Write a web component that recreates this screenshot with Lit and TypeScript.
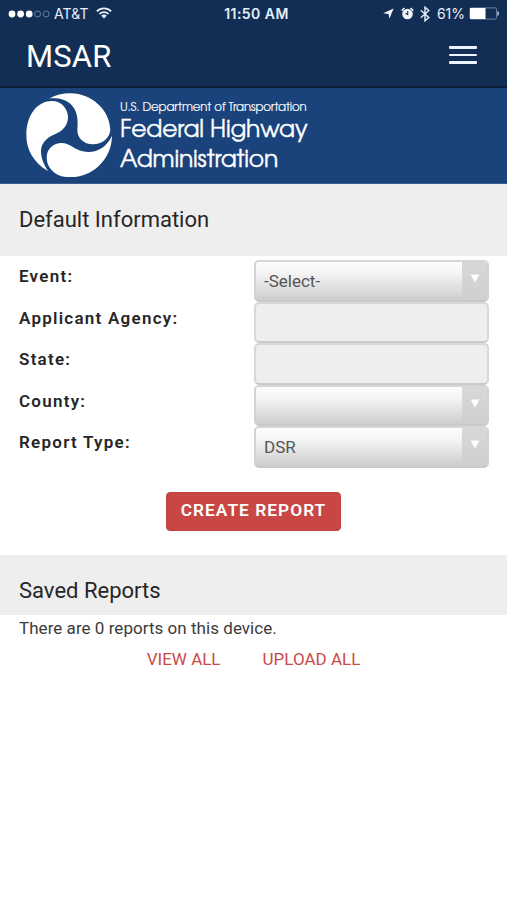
import { LitElement, html, css, svg } from "lit";
import { customElement } from "lit/decorators.js";

interface Field {
  label: string;
  kind: "select" | "text";
  value: string;
}

const fields: Field[] = [
  { label: "Event:", kind: "select", value: "-Select-" },
  { label: "Applicant Agency:", kind: "text", value: "" },
  { label: "State:", kind: "text", value: "" },
  { label: "County:", kind: "select", value: "" },
  { label: "Report Type:", kind: "select", value: "DSR" },
];

@customElement("status-bar")
class StatusBar extends LitElement {
  static styles = css`
    :host {
      display: grid;
      grid-template-columns: 1fr auto 1fr;
      align-items: center;
      height: 27px;
      padding: 0 7px 0 8px;
      box-sizing: border-box;
      color: #e6eefa;
      font: 14px/27px Inter, sans-serif;
    }
    svg { display: block; flex: none; }
    .left, .right { display: flex; align-items: center; }
    .right { justify-content: flex-end; }
    .carrier { margin-left: 4px; letter-spacing: 0.1px; }
    .wifi { margin-left: 7px; margin-top: -2px; }
    .time { font-weight: 600; letter-spacing: 0.45px; font-size: 14px; padding-left: 5px; }
    .arrow { margin-right: 7px; }
    .alarm { margin-right: 6px; }
    .bt { margin-right: 7px; }
    .pct { letter-spacing: 0; margin-right: 4px; }
  `;
  render() {
    return html`
      <div class="left">
        <svg width="42" height="10" viewBox="0 0 42 10">
          ${[4, 12.6, 21.2].map((x) => svg`<circle cx=${x} cy="5" r="3.4" fill="#fff" />`)}
          ${[29.6, 38.2].map((x) => svg`<circle cx=${x} cy="5" r="3" fill="none" stroke="#7086ae" stroke-width=".9" />`)}
        </svg>
        <span class="carrier">AT&amp;T</span>
        <svg class="wifi" width="16" height="12" viewBox="0 0 16 12" fill="none" stroke="#e6eefa" stroke-width="1.7">
          <path d="M.8 4.3C4.8.3 11.2.3 15.2 4.3M3.3 7C6 4.4 10 4.4 12.7 7" />
          <path d="M5.2 8.7Q8 6.5 10.8 8.7L8 11.6Z" fill="#e6eefa" stroke="none" />
        </svg>
      </div>
      <span class="time">11:50 AM</span>
      <div class="right">
        <svg class="arrow" width="11" height="11" viewBox="0 0 11 11"><path d="M10.6.4 6.4 10.8 5.5 5.9.2 5.2Z" fill="#f2f6fc" /></svg>
        <svg class="alarm" width="13" height="13" viewBox="0 0 13 13">
          <circle cx="6.5" cy="7" r="5.3" fill="#f2f6fc" />
          <path d="M.7 3.6 3.5 1M12.3 3.6 9.5 1" stroke="#e6eefa" stroke-width="1.6" />
          <path d="M6.7 4V7.6L4.5 6.2" fill="none" stroke="#122e55" stroke-width="1.1" />
        </svg>
        <svg class="bt" width="10" height="16" viewBox="0 0 10 16"><path d="M.8 4.2 8.8 11.4 5 14.8V1.2L8.8 4.6.8 11.8" fill="none" stroke="#e6eefa" stroke-width="1.4" /></svg>
        <span class="pct">61%</span>
        <svg width="31" height="13" viewBox="0 0 31 13">
          <rect x=".9" y=".9" width="26.7" height="11.2" rx="1.6" fill="none" stroke="#8498b9" stroke-width=".8" />
          <path d="M1 1H16.5V12H1Z" fill="#fff" />
          <path d="M28.8 4.4Q30.4 6.5 28.8 8.6Z" fill="#e6eefa" stroke="#e6eefa" stroke-width=".5" />
        </svg>
      </div>`;
  }
}

@customElement("agency-banner")
class AgencyBanner extends LitElement {
  static styles = css`
    :host {
      display: flex;
      align-items: flex-start;
      height: 98px;
      box-sizing: border-box;
      padding: 5px 0 0 26px;
      background: #19437a;
      border-top: 2px solid #0d2039;
      border-bottom: 1px solid #3c5f8e;
      color: #fff;
      font-family: "TeX Gyre Adventor", "Century Gothic", Lato, sans-serif;
    }
    svg { display: block; flex: none; }
    .names { margin-left: 8px; white-space: nowrap; -webkit-text-stroke: 0.35px #fff; }
    .dept { font-size: 11.8px; line-height: 14px; margin-top: 8px; letter-spacing: -0.16px; -webkit-text-stroke-width: 0.1px; }
    .name { font-size: 23.5px; line-height: 29.5px; letter-spacing: -0.2px; padding-top: 2px; }
  `;
  render() {
    return html`
      <svg width="86" height="84.3" viewBox="78 33 258 253" fill="#fff">
        <path d="M145 268C98 241 78 200 79 157C80 97 113 57 156 57C184 57 203 80 204 104C204 126 192 145 168 155C135 168 122 187 123 211C125 235 133 251 145 268Z" />
        <path d="M147 50C166 39 188 34 211 34C276 35 329 84 331 143C330 168 306 187 279 187C250 186 232 168 232 143C235 112 232 87 214 68C196 51 171 47 147 50Z" />
        <path d="M336 161C335 231 280 286 208 286C166 285 140 258 140 227C140 200 161 183 185 183C202 183 214 193 231 202C274 222 317 203 336 161Z" />
      </svg>
      <div class="names">
        <div class="dept">U.S. Department of Transportation</div>
        <div class="name">Federal Highway<br />Administration</div>
      </div>`;
  }
}

@customElement("app-root")
class AppRoot extends LitElement {
  static styles = css`
    :host {
      display: block;
      min-height: 900px;
      background: #fff;
      color: #262626;
      font-family: Roboto, sans-serif;
    }
    .top { background: #122e55; height: 86px; }
    .bar {
      display: flex;
      justify-content: space-between;
      align-items: center;
      height: 58px;
      padding: 0 30px 0 26px;
    }
    .title { color: #fff; font-size: 31px; letter-spacing: 0.15px; line-height: 58px; padding-top: 1px; }
    .menu { display: flex; flex-direction: column; gap: 4.5px; margin-top: -2px; }
    .menu i { display: block; width: 28px; height: 2.8px; border-radius: 1px; background: #edf4ff; }
    .heading {
      margin: 0;
      padding: 0 19px;
      background: #eee;
      font-size: 22px;
      font-weight: 400;
      letter-spacing: 0;
    }
    .defaults { height: 72px; line-height: 71px; }
    .saved { height: 60px; line-height: 71px; margin-top: 24px; }
    .form { padding: 4px 18px 0 19px; }
    .row { display: flex; justify-content: space-between; height: 41.5px; }
    .label { font-size: 17px; font-weight: 600; letter-spacing: 1.25px; line-height: 33px; }
    .box {
      display: flex;
      justify-content: space-between;
      width: 235px;
      height: 41.5px;
      box-sizing: border-box;
      border: 2px solid #d8d8d8;
      border-bottom-color: #cacaca;
      border-radius: 5px;
      background: #eee;
      overflow: hidden;
      color: #555;
      font-size: 17px;
      line-height: 38px;
    }
    .select {
      background: linear-gradient(#fff 0%, #f5f5f5 30%, #cbcbcb 100%);
      background-origin: border-box;
      border-color: #d6d6d6 #d2d2d2 #c9c9c9;
    }
    .value { padding-left: 8px; }
    .drop {
      width: 25px;
      background: linear-gradient(#d8d8d8, #cfcfcf);
      display: flex;
      justify-content: center;
    }
    .drop svg { margin-top: 12px; }
    .actions { display: flex; justify-content: center; margin-top: 24px; }
    .create {
      width: 175px;
      height: 39px;
      border: 1px solid #bd4240;
      border-radius: 4px;
      padding: 0 0 2px;
      background: #c84744;
      color: #fff;
      font: 600 17.3px/35px Roboto, sans-serif;
      letter-spacing: 1.05px;
    }
    .note { margin: 0; padding: 0 19px; font-size: 17px; letter-spacing: 0.04px; line-height: 26px; color: #3b3b3b; }
    .links { display: flex; justify-content: center; gap: 42px; padding-top: 5px; color: #ca4a48; font-size: 17px; line-height: 26px; }
  `;

  private control(f: Field) {
    return f.kind === "text"
      ? html`<div class="box"></div>`
      : html`<div class="box select">
          <span class="value">${f.value}</span>
          <span class="drop"><svg width="10" height="9" viewBox="0 0 10 9"><path d="M.6.5H9.4L5 8.5Z" fill="#fff" /></svg></span>
        </div>`;
  }

  render() {
    return html`
      <header class="top">
        <status-bar></status-bar>
        <div class="bar">
          <span class="title">MSAR</span>
          <span class="menu"><i></i><i></i><i></i></span>
        </div>
      </header>
      <agency-banner></agency-banner>
      <h2 class="heading defaults">Default Information</h2>
      <div class="form">
        ${fields.map((f) => html`<div class="row"><span class="label">${f.label}</span>${this.control(f)}</div>`)}
      </div>
      <div class="actions"><button class="create">CREATE REPORT</button></div>
      <h2 class="heading saved">Saved Reports</h2>
      <p class="note">There are 0 reports on this device.</p>
      <div class="links"><span>VIEW ALL</span><span>UPLOAD ALL</span></div>`;
  }
}
